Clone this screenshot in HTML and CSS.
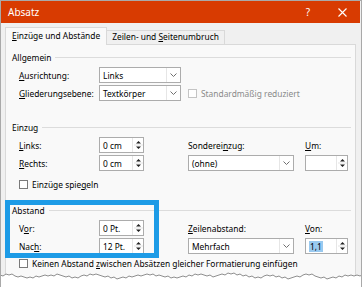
FILE: index.html
```html
<!DOCTYPE html>
<html lang="de">
<head>
<meta charset="utf-8">
<title>Absatz</title>
<link rel="stylesheet" href="styles.css">
</head>
<body>
<div class="window">
  <div class="titlebar">
    <span class="title">Absatz</span>
    <span class="help">?</span>
    <svg class="close" width="9" height="9" viewBox="0 0 9 9"><path d="M0.5 0.5 L8.5 8.5 M8.5 0.5 L0.5 8.5" stroke="#fff" stroke-width="1.1" fill="none"/></svg>
  </div>
  <div class="client">
    <div class="tabs">
      <div class="tab active"><u>E</u>inzüge und Abstände</div>
      <div class="tab">Zeilen- und <u>S</u>eitenumbruch</div>
    </div>
    <div class="panel">
      <div class="heading"><span>Allgemein</span></div>
      <div class="rows">
        <div class="row">
          <label class="lbl"><u>A</u>usrichtung:</label>
          <div class="combo w82"><span class="val">Links</span><span class="arrow"><svg width="7" height="4" viewBox="0 0 7 4"><path d="M0.5 0.5 L3.5 3.5 L6.5 0.5" stroke="#707070" fill="none"/></svg></span></div>
        </div>
        <div class="row">
          <label class="lbl"><u>G</u>liederungsebene:</label>
          <div class="combo w82"><span class="val">Textkörper</span><span class="arrow"><svg width="7" height="4" viewBox="0 0 7 4"><path d="M0.5 0.5 L3.5 3.5 L6.5 0.5" stroke="#707070" fill="none"/></svg></span></div>
          <div class="check disabled"><span class="box"></span><span>Standardmäßig reduziert</span></div>
        </div>
      </div>

      <div class="heading h-einzug"><span>Einzug</span></div>
      <div class="grid4">
        <label class="lbl c1"><u>L</u>inks:</label>
        <div class="spin c2"><span class="val">0 cm</span><span class="btns"><svg width="9" height="14" viewBox="0 0 9 14"><path d="M2 5.5 L4.5 3 L7 5.5 Z M2 8.5 L4.5 11 L7 8.5 Z" fill="#222"/><path d="M0 7 H9" stroke="#e3e3e3"/></svg></span></div>
        <label class="lbl2 c3">Sonderei<u>n</u>zug:</label>
        <label class="lbl2 c4"><u>U</u>m:</label>

        <label class="lbl c1"><u>R</u>echts:</label>
        <div class="spin c2"><span class="val">0 cm</span><span class="btns"><svg width="9" height="14" viewBox="0 0 9 14"><path d="M2 5.5 L4.5 3 L7 5.5 Z M2 8.5 L4.5 11 L7 8.5 Z" fill="#222"/><path d="M0 7 H9" stroke="#e3e3e3"/></svg></span></div>
        <div class="combo c3"><span class="val">(ohne)</span><span class="arrow"><svg width="7" height="4" viewBox="0 0 7 4"><path d="M0.5 0.5 L3.5 3.5 L6.5 0.5" stroke="#707070" fill="none"/></svg></span></div>
        <div class="spin c4"><span class="val"></span><span class="btns"><svg width="9" height="14" viewBox="0 0 9 14"><path d="M2 5.5 L4.5 3 L7 5.5 Z M2 8.5 L4.5 11 L7 8.5 Z" fill="#222"/><path d="M0 7 H9" stroke="#e3e3e3"/></svg></span></div>
      </div>
      <div class="check mirror"><span class="box"></span><span>Einzüge spie<u>g</u>eln</span></div>

      <div class="heading h-abstand"><span>Abstand</span></div>
      <div class="grid4">
        <label class="lbl c1">V<u>o</u>r:</label>
        <div class="spin c2"><span class="val">0 Pt.</span><span class="btns"><svg width="9" height="14" viewBox="0 0 9 14"><path d="M2 5.5 L4.5 3 L7 5.5 Z M2 8.5 L4.5 11 L7 8.5 Z" fill="#222"/><path d="M0 7 H9" stroke="#e3e3e3"/></svg></span></div>
        <label class="lbl2 c3"><u>Z</u>eilenabstand:</label>
        <label class="lbl2 c4"><u>V</u>on:</label>

        <label class="lbl c1">Nac<u>h</u>:</label>
        <div class="spin c2"><span class="val">12 Pt.</span><span class="btns"><svg width="9" height="14" viewBox="0 0 9 14"><path d="M2 5.5 L4.5 3 L7 5.5 Z M2 8.5 L4.5 11 L7 8.5 Z" fill="#222"/><path d="M0 7 H9" stroke="#e3e3e3"/></svg></span></div>
        <div class="combo c3"><span class="val">Mehrfach</span><span class="arrow"><svg width="7" height="4" viewBox="0 0 7 4"><path d="M0.5 0.5 L3.5 3.5 L6.5 0.5" stroke="#707070" fill="none"/></svg></span></div>
        <div class="spin c4"><span class="val"><span class="sel">1,1</span></span><span class="btns"><svg width="9" height="14" viewBox="0 0 9 14"><path d="M2 5.5 L4.5 3 L7 5.5 Z M2 8.5 L4.5 11 L7 8.5 Z" fill="#222"/><path d="M0 7 H9" stroke="#e3e3e3"/></svg></span></div>
      </div>
      <div class="check last"><span class="box"></span><span>Keinen Abstand <u>z</u>wischen Absätzen gleicher Formatierung einfügen</span></div>
    </div>
  </div>
  <div class="highlight"></div>
  <svg class="tear" width="362" height="20" viewBox="0 0 362 20">
    <path d="M0,6 L3,7 L6,5 L9,6 L12,5 L15,7 L18,8 L21,7 L24,8 L27,9 L30,8 L33,9 L36,7 L39,8 L42,7 L45,6 L48,7 L51,6 L54,7 L57,5 L60,6 L63,7 L66,8 L69,7 L72,9 L75,8 L78,9 L81,7 L84,6 L87,7 L90,5 L93,6 L96,5 L99,6 L102,7 L105,8 L108,7 L111,9 L114,8 L117,10 L120,9 L123,8 L126,9 L129,7 L132,8 L135,7 L138,6 L141,7 L144,6 L147,5 L150,6 L153,5 L156,7 L159,6 L162,7 L165,8 L168,7 L171,9 L174,8 L177,9 L180,8 L183,7 L186,8 L189,6 L192,7 L195,5 L198,6 L201,5 L204,6 L207,7 L210,6 L213,8 L216,7 L219,6 L222,5 L225,6 L228,4 L231,5 L234,4 L237,6 L240,5 L243,7 L246,6 L249,8 L252,7 L255,9 L258,8 L261,9 L264,7 L267,6 L270,7 L273,6 L276,8 L279,7 L282,9 L285,8 L288,10 L291,9 L294,8 L297,7 L300,8 L303,6 L306,5 L309,6 L312,5 L315,7 L318,8 L321,9 L324,8 L327,10 L330,9 L333,8 L336,9 L339,7 L342,8 L345,6 L348,7 L351,6 L354,7 L357,6 L360,7 L362,6 L362,20 L0,20 Z" fill="#fff" stroke="#8e8e8e" stroke-width="1"/>
  </svg>
</div>
</body>
</html>
```

FILE: styles.css
```css
* { box-sizing: border-box; }
body {
  margin: 0;
  background: #fff;
  font-family: "Noto Sans", "Open Sans", sans-serif;
  font-size: 8.4px;
  color: #000;
}
u { text-decoration: underline; text-underline-offset: 1px; }

.window {
  position: relative;
  width: 362px;
  height: 287px;
  overflow: hidden;
  border: 1px solid #a9a9a9;
  border-bottom: none;
  background: #f0f0f0;
}

.titlebar {
  height: 22px;
  background: #d83b01;
  color: #fff;
  display: flex;
  align-items: center;
  padding: 0 13px 0 7px;
  font-size: 10px;
  margin-right: 1px;
}
.title { flex: 1; }
.help { margin-right: 28px; font-size: 10px; }
.close { display: block; }

.client {
  padding: 4px 5px 0 4px;
}

.tabs {
  display: flex;
  align-items: flex-end;
  height: 17px;
  position: relative;
  z-index: 1;
}
.tab {
  height: 14px;
  padding: 0 5px;
  border: 1px solid #d9d9d9;
  border-bottom: none;
  background: #f0f0f0;
  line-height: 12px;
  white-space: nowrap;
}
.tab.active {
  height: 18px;
  margin-bottom: -1px;
  background: #f9f9f9;
  padding: 0 6px;
  line-height: 16px;
}
.tab + .tab { border-left: none; }

.panel {
  border: 1px solid #d9d9d9;
  background: #f9f9f9;
  height: 260px;
  padding: 6px 4px 0 6px;
}

.heading {
  display: flex;
  align-items: center;
  height: 12px;
  gap: 4px;
}
.heading::after {
  content: "";
  flex: 1;
  height: 1px;
  background: #dcdcdc;
}

.rows { display: flex; flex-direction: column; gap: 2px; margin-top: 4px; padding-left: 7px; }
.row { display: flex; align-items: center; height: 16px; }
.lbl { width: 80px; white-space: nowrap; align-self: center; }
.lbl2 { white-space: nowrap; align-self: center; }

.combo, .spin {
  height: 16px;
  border: 1px solid #acacac;
  background: #fff;
  display: flex;
  align-items: center;
}
.combo .val, .spin .val { flex: 1; padding-left: 3px; white-space: nowrap; }
.combo .arrow {
  width: 14px;
  height: 14px;
  border-left: 1px solid #e6e6e6;
  display: flex;
  align-items: center;
  justify-content: center;
}
.combo .arrow svg, .spin .btns svg { display: block; }
.spin .btns {
  width: 11px;
  height: 14px;
  border-left: 1px solid #e6e6e6;
  display: flex;
  justify-content: center;
}
.w82 { width: 82px; }

.check { display: flex; align-items: center; gap: 4px; height: 12px; white-space: nowrap; }
.check .box { width: 9px; height: 9px; border: 1px solid #7a7a7a; background: #fff; }
.check.disabled { margin-left: 7px; color: #8a8a8a; }
.check.disabled .box { border-color: #c4c4c4; }

.h-einzug { margin-top: 20px; }
.grid4 {
  display: grid;
  grid-template-columns: 80px 45px 44px 106px 11px 43px;
  grid-template-rows: 16px 16px;
  row-gap: 2px;
  margin-top: 4px;
  padding-left: 7px;
}
.c1 { grid-column: 1; }
.c2 { grid-column: 2; }
.c3 { grid-column: 4; }
.c4 { grid-column: 6; }

.check.mirror { margin-top: 7px; padding-left: 7px; }
.h-abstand { margin-top: 14px; }
.check.last { margin-top: 3px; padding-left: 7px; }

.sel { background: #99c9ef; padding: 0 1px; }

.highlight {
  position: absolute;
  left: 4px;
  top: 199px;
  width: 154px;
  height: 58px;
  border: 5px solid #1d9be6;
}
.tear {
  position: absolute;
  left: -1px;
  top: 268px;
  display: block;
}
```
